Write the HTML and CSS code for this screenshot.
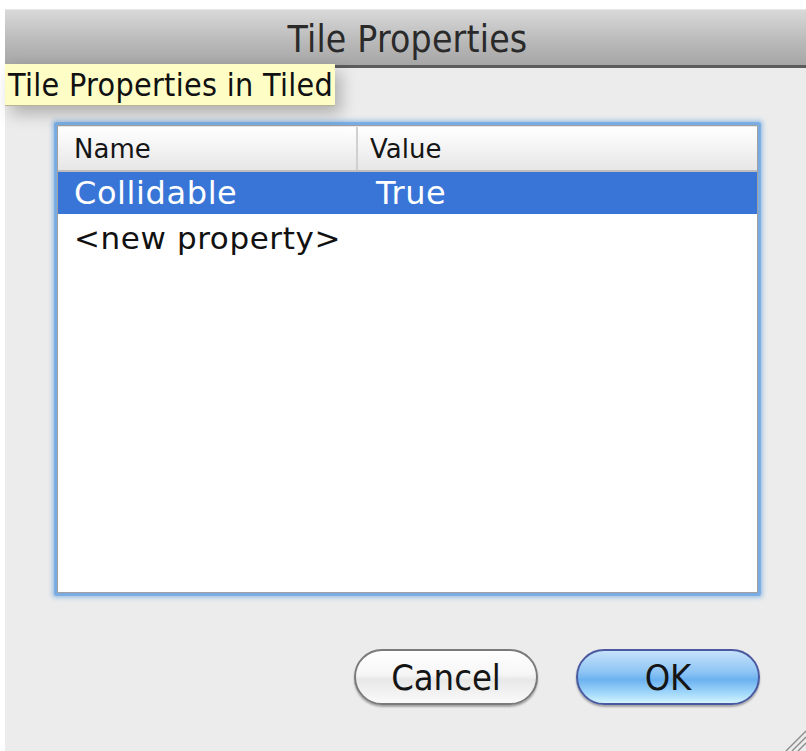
FILE: index.html
```html
<!DOCTYPE html>
<html>
<head>
<meta charset="utf-8">
<title>Tile Properties</title>
<link rel="stylesheet" href="styles.css">
</head>
<body>
<div class="window">
  <div class="titlebar"><span class="title">Tile Properties</span></div>
  <div class="tooltip">Tile Properties in Tiled</div>
  <div class="content">
    <div class="table">
      <div class="row head">
        <div class="cell name">Name</div>
        <div class="cell value">Value</div>
      </div>
      <div class="row selected">
        <div class="cell name">Collidable</div>
        <div class="cell value">True</div>
      </div>
      <div class="row plain">
        <div class="cell name">&lt;new property&gt;</div>
      </div>
    </div>
  </div>
  <div class="buttons">
    <button class="btn cancel">Cancel</button>
    <button class="btn ok">OK</button>
  </div>
  <svg class="grip" width="26" height="26" viewBox="0 0 26 26">
    <path d="M26 6 L6 26 M26 12 L12 26 M26 18 L18 26" stroke="#8a8a8a" stroke-width="1.4" fill="none"/>
  </svg>
</div>
</body>
</html>
```

FILE: styles.css
```css
html, body {
  margin: 0;
  padding: 0;
  background: #ffffff;
}

body {
  width: 806px;
  height: 751px;
  overflow: hidden;
}

.window {
  position: relative;
  margin: 9px 0 0 5px;
  width: 801px;
  height: 742px;
  background: #ececec;
  display: flex;
  flex-direction: column;
}

.titlebar {
  height: 55px;
  background: linear-gradient(#d9d9d9, #b8b8b8 60%, #a6a6a6);
  border-bottom: 3px solid #5c5c5c;
  border-top: 1px solid #e6e6e6;
  display: flex;
  justify-content: center;
  align-items: center;
}

.title {
  font-family: "DejaVu Sans", sans-serif;
  font-stretch: condensed;
  font-size: 37px;
  color: #2a2a2a;
  margin-top: 3px;
  margin-left: 4px;
  letter-spacing: 0.2px;
}

.tooltip {
  position: absolute;
  left: 0;
  top: 55px;
  width: 330px;
  height: 42px;
  box-sizing: border-box;
  padding: 0 0 0 3px;
  background: #fefdc6;
  border-bottom: 1px solid #b6b493;
  box-shadow: 6px 8px 16px rgba(0, 0, 0, 0.25);
  font-family: "DejaVu Sans", sans-serif;
  font-stretch: condensed;
  font-size: 32px;
  letter-spacing: 0.3px;
  line-height: 42px;
  color: #111;
  white-space: nowrap;
}

.content {
  padding: 57px 48px 0 52px;
}

.table {
  height: 466px;
  background: #fff;
  border: 1px solid #a0a0a0;
  border-radius: 1px;
  box-shadow: 0 0 1px 3px #78ace2, 0 0 4px 5px rgba(120, 172, 226, 0.6);
  font-family: "DejaVu Sans", sans-serif;
}

.row {
  display: flex;
  height: 42px;
  align-items: center;
}

.cell.name {
  width: 300px;
  box-sizing: border-box;
  padding-left: 16px;
  white-space: nowrap;
}

.cell.value {
  flex: 1;
  padding-left: 18px;
}

.head {
  height: 43px;
  background: linear-gradient(#ffffff, #f3f3f3 50%, #e6e6e6);
  border-top: 1px solid #e8e8e8;
  border-bottom: 2px solid #bdbdbd;
  font-size: 26px;
  color: #151515;
}

.head .cell.name {
  border-right: 2px solid #d0d0d0;
  height: 100%;
  display: flex;
  align-items: center;
}

.head .cell.value {
  padding-left: 12px;
}

.row.selected {
  background: #3875d7;
  color: #fff;
  font-size: 32px;
  letter-spacing: 0.6px;
}

.row.plain {
  font-size: 31px;
  letter-spacing: 0.6px;
  color: #111;
  height: 48px;
}

.buttons {
  display: flex;
  justify-content: flex-end;
  gap: 38px;
  padding: 56px 46px 0 0;
}

.btn {
  width: 184px;
  height: 56px;
  border-radius: 28px;
  font-family: "DejaVu Sans", sans-serif;
  font-stretch: condensed;
  font-size: 36px;
  color: #151515;
  padding: 0;
  box-shadow: 0 2px 2px rgba(0, 0, 0, 0.3);
}

.cancel {
  border: 2px solid #7a7a7a;
  background: linear-gradient(#ffffff, #f6f6f6 45%, #e8e8e8 55%, #fafafa);
}

.ok {
  border: 2px solid #4b5aa0;
  background: linear-gradient(#c6e2fb, #8ec5f4 40%, #6cb2f0 55%, #9fd6fa 80%, #d2f4ff);
}

.grip {
  position: absolute;
  right: 0;
  bottom: 0;
}
```
